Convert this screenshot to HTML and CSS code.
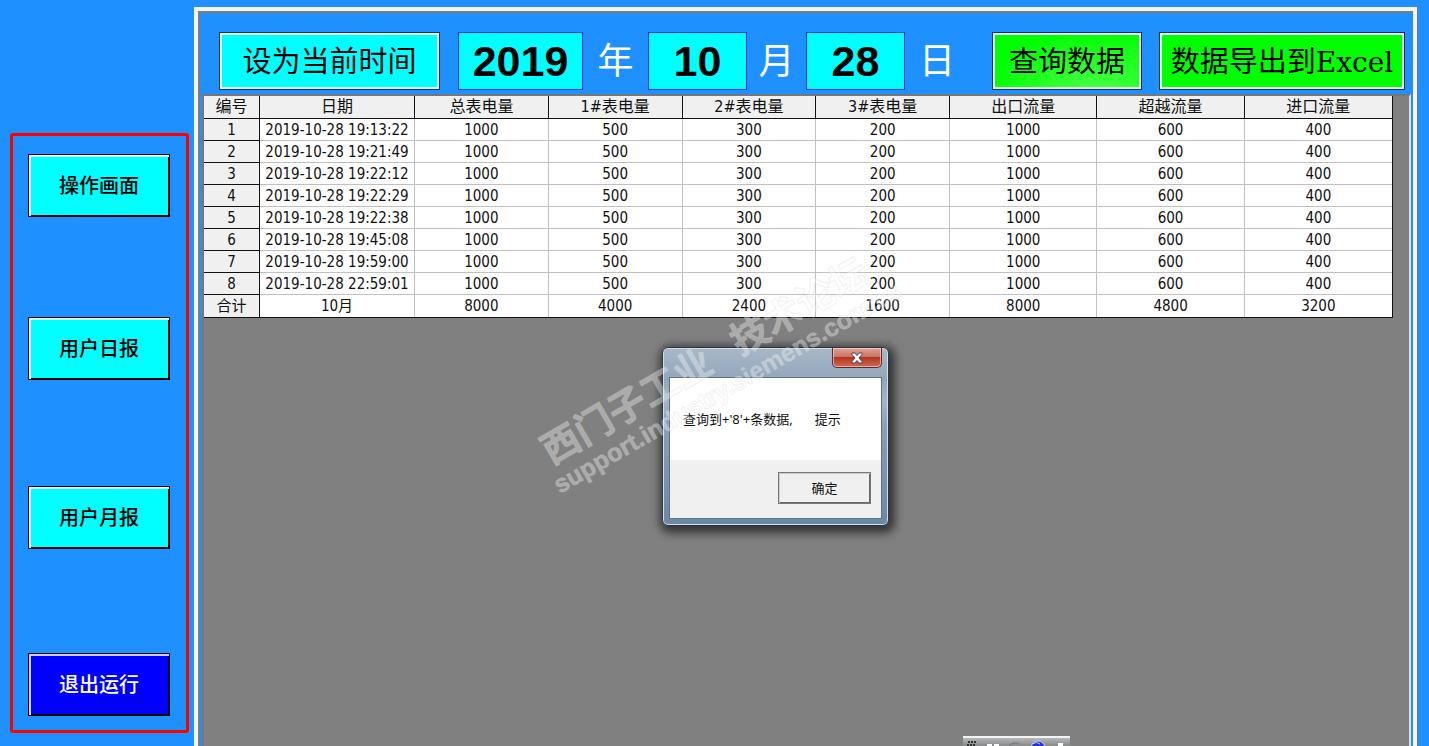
FILE: index.html
```
<!DOCTYPE html>
<html lang="zh-CN">
<head>
    <meta charset="UTF-8">
    <meta name="viewport" content="width=device-width, initial-scale=1.0">
    <title>用户月报</title>
    <link rel="stylesheet" href="styles.css">
</head>
<body>

    <!-- Navigation -->
    <aside class="sidebar">
        <nav class="nav-box">
            <button class="nav-btn">操作画面</button>
            <button class="nav-btn">用户日报</button>
            <button class="nav-btn">用户月报</button>
            <button class="nav-btn exit-btn">退出运行</button>
        </nav>
    </aside>

    <main class="report">
        <!-- Query bar -->
        <form class="toolbar" onsubmit="return false">
            <button type="button" class="tool-btn now-btn">设为当前时间</button>
            <div class="date-fields">
                <input id="year" type="text" value="2019">
                <label for="year">年</label>
                <input id="month" type="text" value="10">
                <label for="month">月</label>
                <input id="day" type="text" value="28">
                <label for="day">日</label>
            </div>
            <button type="button" class="tool-btn query-btn">查询数据</button>
            <button type="button" class="tool-btn export-btn">数据导出到<span class="latin">Excel</span></button>
        </form>

        <!-- Data grid -->
        <div class="grid">
            <table>
                <colgroup>
                    <col class="col-no">
                    <col class="col-date">
                    <col class="col-power" span="4">
                    <col class="col-flow" span="3">
                </colgroup>
                <thead>
                    <tr><th>编号</th><th>日期</th><th>总表电量</th><th>1#表电量</th><th>2#表电量</th><th>3#表电量</th><th>出口流量</th><th>超越流量</th><th>进口流量</th></tr>
                </thead>
                <tbody>
                    <tr><th>1</th><td>2019-10-28 19:13:22</td><td>1000</td><td>500</td><td>300</td><td>200</td><td>1000</td><td>600</td><td>400</td></tr>
                    <tr><th>2</th><td>2019-10-28 19:21:49</td><td>1000</td><td>500</td><td>300</td><td>200</td><td>1000</td><td>600</td><td>400</td></tr>
                    <tr><th>3</th><td>2019-10-28 19:22:12</td><td>1000</td><td>500</td><td>300</td><td>200</td><td>1000</td><td>600</td><td>400</td></tr>
                    <tr><th>4</th><td>2019-10-28 19:22:29</td><td>1000</td><td>500</td><td>300</td><td>200</td><td>1000</td><td>600</td><td>400</td></tr>
                    <tr><th>5</th><td>2019-10-28 19:22:38</td><td>1000</td><td>500</td><td>300</td><td>200</td><td>1000</td><td>600</td><td>400</td></tr>
                    <tr><th>6</th><td>2019-10-28 19:45:08</td><td>1000</td><td>500</td><td>300</td><td>200</td><td>1000</td><td>600</td><td>400</td></tr>
                    <tr><th>7</th><td>2019-10-28 19:59:00</td><td>1000</td><td>500</td><td>300</td><td>200</td><td>1000</td><td>600</td><td>400</td></tr>
                    <tr><th>8</th><td>2019-10-28 22:59:01</td><td>1000</td><td>500</td><td>300</td><td>200</td><td>1000</td><td>600</td><td>400</td></tr>
                    <tr><th>合计</th><td>10月</td><td>8000</td><td>4000</td><td>2400</td><td>1600</td><td>8000</td><td>4800</td><td>3200</td></tr>
                </tbody>
            </table>
        </div>

        <!-- Message box -->
        <div class="dialog" role="dialog" aria-describedby="message">
            <div class="dialog-title">
                <button class="close-btn" aria-label="关闭">
                    <svg width="14" height="12" viewBox="0 0 14 12">
                        <path d="M2 1h3l2 2.500L9 1h3v1.500L9 6l3 3.500V11H9L7 8.500 5 11H2V9.500L5 6 2 2.500z" fill="#fff" stroke="#4b4650"/>
                    </svg>
                </button>
            </div>
            <div class="dialog-client">
                <div class="dialog-text" id="message"><span>查询到+'8'+条数据,</span><span>提示</span></div>
                <div class="dialog-buttons">
                    <button class="ok-btn">确定</button>
                </div>
            </div>
        </div>

        <!-- Input method bar -->
        <svg class="ime-bar" width="107" height="10" viewBox="0 0 107 10">
            <defs>
                <linearGradient id="bar" x1="0" y1="0" x2="0" y2="1">
                    <stop offset="0" stop-color="#c4c6c7"/>
                    <stop offset="1" stop-color="#858889"/>
                </linearGradient>
            </defs>
            <rect width="107" height="10" fill="url(#bar)"/>
            <path d="M0 1h107" stroke="#f4f4f4" stroke-width="2"/>
            <path d="M5 6h9M4 9h9" stroke="#333" stroke-width="2" stroke-dasharray="2 1"/>
            <path d="M24 9h5M31 9h5" stroke="#fff" stroke-width="2"/>
            <path d="M46 10q5-5 10-2" fill="none" stroke="#6e7173"/>
            <circle cx="75" cy="12" r="7" fill="#2432d8" stroke="#d5d5dd"/>
            <path d="M69 8q5-3 8 0" fill="none" stroke="#b9c4ff"/>
            <rect x="95" y="7" width="5" height="3" fill="#fff"/>
        </svg>
    </main>

    <div class="watermark">
        <div class="mark-name"><span>西门子工业</span><span>技术论坛</span></div>
        <div class="mark-url">support.industry.siemens.com/cs</div>
    </div>

</body>
</html>
```
FILE: styles.css
```
* {
    box-sizing: border-box;
}

body {
    margin: 0;
    height: 100vh;
    display: flex;
    overflow: hidden;
    position: relative;
    background: #1e90ff;
    font-family: "Noto Sans", "Noto Sans CJK SC", sans-serif;
}

button,
input {
    font-family: inherit;
    padding: 0;
}

/* Navigation */
.sidebar {
    flex: 0 0 194px;
    padding: 133px 5px 0 10px;
}

.nav-box {
    display: grid;
    grid-template-rows: 163px 169px 167px 63px;
    align-items: start;
    padding: 18px 16px 14px 15px;
    border: 3px solid #f00;
    border-radius: 3px;
}

.nav-btn {
    height: 63px;
    padding-bottom: 2px;
    background: #0ff;
    border: 1px solid #000;
    box-shadow: inset 2px 2px #dff, inset -1px -1px #000;
    font-size: 20px;
    font-weight: 500;
    color: #000;
}

.exit-btn {
    background: #00f;
    box-shadow: inset 2px 2px #ccf, inset -1px -1px #000;
    color: #fff;
}

/* Report frame */
.report {
    flex: 1;
    margin: 7px 12px 0 0;
    display: flex;
    flex-direction: column;
    position: relative;
    border: 4px solid #f4f4f4;
    border-bottom: 0;
    box-shadow: inset 2px 2px #7c7c7c, 1px 0 #777;
}

/* Query bar */
.toolbar {
    display: flex;
    padding: 21px 8px 4px 21px;
}

.tool-btn {
    height: 58px;
    padding-bottom: 4px;
    border: 1px solid #234;
    box-shadow: inset 2px 2px #e4ffff, inset -2px -2px #e8e8e8;
    font-size: 29px;
    font-weight: 400;
    color: #000;
    white-space: nowrap;
}

.now-btn {
    width: 221px;
    background: #0ff;
}

.query-btn {
    width: 150px;
    margin: 0 17px 0 auto;
    background: radial-gradient(ellipse at 70% 110%, #4cff4c, #0f0 75%);
}

.export-btn {
    width: 246px;
    background: #0f0;
}

.latin {
    font-family: "DejaVu Serif", serif;
    font-size: 28px;
    line-height: 1;
}

.date-fields {
    display: grid;
    grid-template-columns: 125px 65px 99px 59px 99px 64px;
    align-items: center;
    margin-left: 18px;
}

.date-fields input {
    width: 100%;
    height: 58px;
    background: #0ff;
    border: 1px solid #0030ff;
    font-family: "Liberation Sans", Arial, sans-serif;
    font-size: 43px;
    font-weight: 700;
    text-align: center;
    color: #000;
}

.date-fields label {
    font-size: 36px;
    font-weight: 400;
    line-height: 52px;
    text-align: center;
    color: #fff;
}

/* Data grid */
.grid {
    flex: 1;
    margin: 0 2px 0 4px;
    padding-right: 16px;
    background: #808080;
    border: 2px solid #ddd;
    border-top-color: #777;
    border-left-color: #777;
    border-bottom: 0;
}

table {
    width: 100%;
    table-layout: fixed;
    border-collapse: separate;
    border-spacing: 0;
    border-right: 1px solid #111;
    border-bottom: 1px solid #111;
    background: #fff;
    font-family: "DejaVu Sans Condensed", "Noto Sans CJK SC", sans-serif;
}

.col-no {
    width: 56px;
}

.col-date {
    width: 155px;
}

.col-flow {
    width: 12.4%;
}

th,
td {
    height: 22px;
    padding: 0;
    border-right: 1px solid #c0c0c0;
    border-bottom: 1px solid #c0c0c0;
    font-size: 15px;
    font-weight: 400;
    line-height: 20px;
    text-align: center;
    white-space: nowrap;
    color: #111;
}

th {
    background: #f0f0f0;
    border-color: #111;
}

thead th {
    height: 23px;
    font-size: 16px;
}

tr :last-child {
    border-right: 0;
}

tbody tr:last-child > * {
    border-bottom: 0;
}

/* Message box */
.dialog {
    position: absolute;
    top: 336px;
    left: 464px;
    width: 227px;
    padding: 0 6px 6px;
    border: 1px solid #2c3743;
    border-radius: 6px;
    background: linear-gradient(#a9b8c8, #91a6bc 18%, #a5b5c6 30%, #87a0b9 45%, #6c88a5);
    box-shadow: inset 0 0 0 1px #d3dde7, 2px 3px 10px 4px rgba(0, 0, 0, 0.6);
}

.dialog-title {
    height: 29px;
    display: flex;
    justify-content: flex-end;
}

.close-btn {
    width: 50px;
    height: 20px;
    display: flex;
    align-items: center;
    justify-content: center;
    border: 1px solid #5b2d2d;
    border-top: 0;
    border-radius: 0 0 5px 5px;
    background: linear-gradient(#dba398, #cc7565 45%, #b43520 50%, #cf6a55);
    box-shadow: inset 0 0 0 1px rgba(255, 220, 210, 0.6);
}

.dialog-client {
    border: 1px solid #5f7183;
    background: #f0f0f0;
}

.dialog-text {
    display: flex;
    gap: 22px;
    padding: 31px 13px;
    background: #fff;
    font-size: 13px;
    line-height: 20px;
    white-space: nowrap;
    color: #111;
}

.dialog-buttons {
    display: flex;
    justify-content: flex-end;
    padding: 12px 10px 14px;
}

.ok-btn {
    width: 93px;
    height: 32px;
    padding-bottom: 2px;
    background: #f0f0f0;
    border: 1px solid #777;
    box-shadow: inset 1px 1px #ccc, inset -1px -1px #666;
    font-size: 13px;
    color: #111;
}

.ime-bar {
    position: absolute;
    bottom: 0;
    left: 765px;
}

/* Forum watermark */
.watermark {
    position: absolute;
    top: 333px;
    left: 518px;
    width: 400px;
    transform: rotate(-30deg);
    pointer-events: none;
    white-space: nowrap;
    font-weight: 700;
    color: rgba(255, 255, 255, 0.35);
    -webkit-text-stroke: 1px rgba(210, 210, 210, 0.3);
}

.mark-name {
    display: flex;
    gap: 28px;
    padding-left: 7px;
    font-size: 38px;
    line-height: 42px;
}

.mark-url {
    font-family: "Liberation Sans", Arial, sans-serif;
    font-size: 25px;
    line-height: 28px;
}
```
